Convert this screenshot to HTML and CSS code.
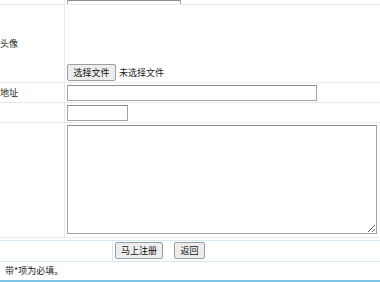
FILE: index.html
```html
<!DOCTYPE html>
<html lang="zh">
<head>
<meta charset="utf-8">
<link rel="stylesheet" href="styles.css">
</head>
<body>
<div class="form">
  <div class="row row-top">
    <div class="label"></div>
    <div class="field"><input class="txt txt-top" type="text"></div>
  </div>
  <div class="row row-avatar">
    <div class="label label-mid"><span class="cut">头像</span></div>
    <div class="field field-bottom">
      <span class="btn">选择文件</span><span class="nofile">未选择文件</span>
    </div>
  </div>
  <div class="row row-line">
    <div class="label label-mid"><span class="cut">地址</span></div>
    <div class="field"><input class="txt txt-addr" type="text"></div>
  </div>
  <div class="row row-line">
    <div class="label"></div>
    <div class="field"><input class="txt txt-small" type="text"></div>
  </div>
  <div class="row row-area">
    <div class="label"></div>
    <div class="field"><textarea class="area"></textarea></div>
  </div>
</div>
<div class="actions">
  <div class="act-left"></div>
  <div class="act-right">
    <span class="btn btn-reg">马上注册</span>
    <span class="btn btn-back">返回</span>
  </div>
</div>
<div class="note">带*项为必填。</div>
</body>
</html>
```
FILE: styles.css
```css
html, body {
  margin: 0;
  padding: 0;
  background: #fff;
}
body {
  font-family: "Noto Sans CJK SC", "Noto Sans", sans-serif;
  font-size: 9px;
  color: #1a1a1a;
  width: 380px;
  height: 282px;
  overflow: hidden;
}
.form {
  display: flex;
  flex-direction: column;
}
.row {
  display: flex;
  border-bottom: 1px solid #e3ecf6;
}
.label {
  width: 64px;
  flex: none;
  border-right: 1px solid #e3ecf6;
  display: flex;
}
.label-mid {
  align-items: center;
}
.cut {
  margin-left: 0;
  line-height: 12px;
}
.field {
  flex: 1;
  padding-left: 2px;
  display: flex;
}
.row-top {
  height: 4px;
  overflow: hidden;
}
.txt-top {
  margin-top: -14px;
  width: 114px;
}
.txt {
  box-sizing: border-box;
  height: 16px;
  border: 1px solid #a3a3a3;
  border-top-color: #8d8d8d;
  padding: 0;
  margin-top: 0;
  background: #fff;
  outline: none;
}
.row-avatar {
  height: 77px;
}
.field-bottom {
  align-items: flex-end;
  padding-bottom: 1px;
}
.btn {
  box-sizing: border-box;
  display: inline-flex;
  align-items: center;
  justify-content: center;
  height: 17px;
  border: 1px solid #9e9e9e;
  border-radius: 2px;
  background: #ededed;
  color: #111;
  line-height: 1;
}
.field-bottom .btn {
  width: 49px;
}
.nofile {
  margin-left: 3px;
  line-height: 17px;
}
.row-line {
  height: 19px;
  align-items: stretch;
}
.row-line .field {
  align-items: center;
}
.txt-addr {
  width: 250px;
}
.txt-small {
  width: 61px;
}
.row-area {
  height: 114px;
}
.area {
  box-sizing: border-box;
  margin-top: 2px;
  width: 310px;
  height: 109px;
  border: 1px solid #a3a3a3;
  border-top-color: #8d8d8d;
  padding: 0;
  outline: none;
}
.actions {
  display: flex;
  margin-top: 2px;
  border-top: 1px solid #d6eaf6;
  border-bottom: 1px solid #d6eaf6;
  height: 20px;
}
.act-left {
  width: 112px;
  flex: none;
  border-right: 1px solid #d6eaf6;
}
.act-right {
  display: flex;
  align-items: flex-start;
  padding-left: 2px;
  padding-top: 1px;
  gap: 11px;
}
.btn-reg {
  width: 48px;
}
.btn-back {
  width: 31px;
}
.note {
  height: 18px;
  line-height: 18px;
  padding-left: 5px;
  border-bottom: 2px solid #7cc3e6;
}
```
